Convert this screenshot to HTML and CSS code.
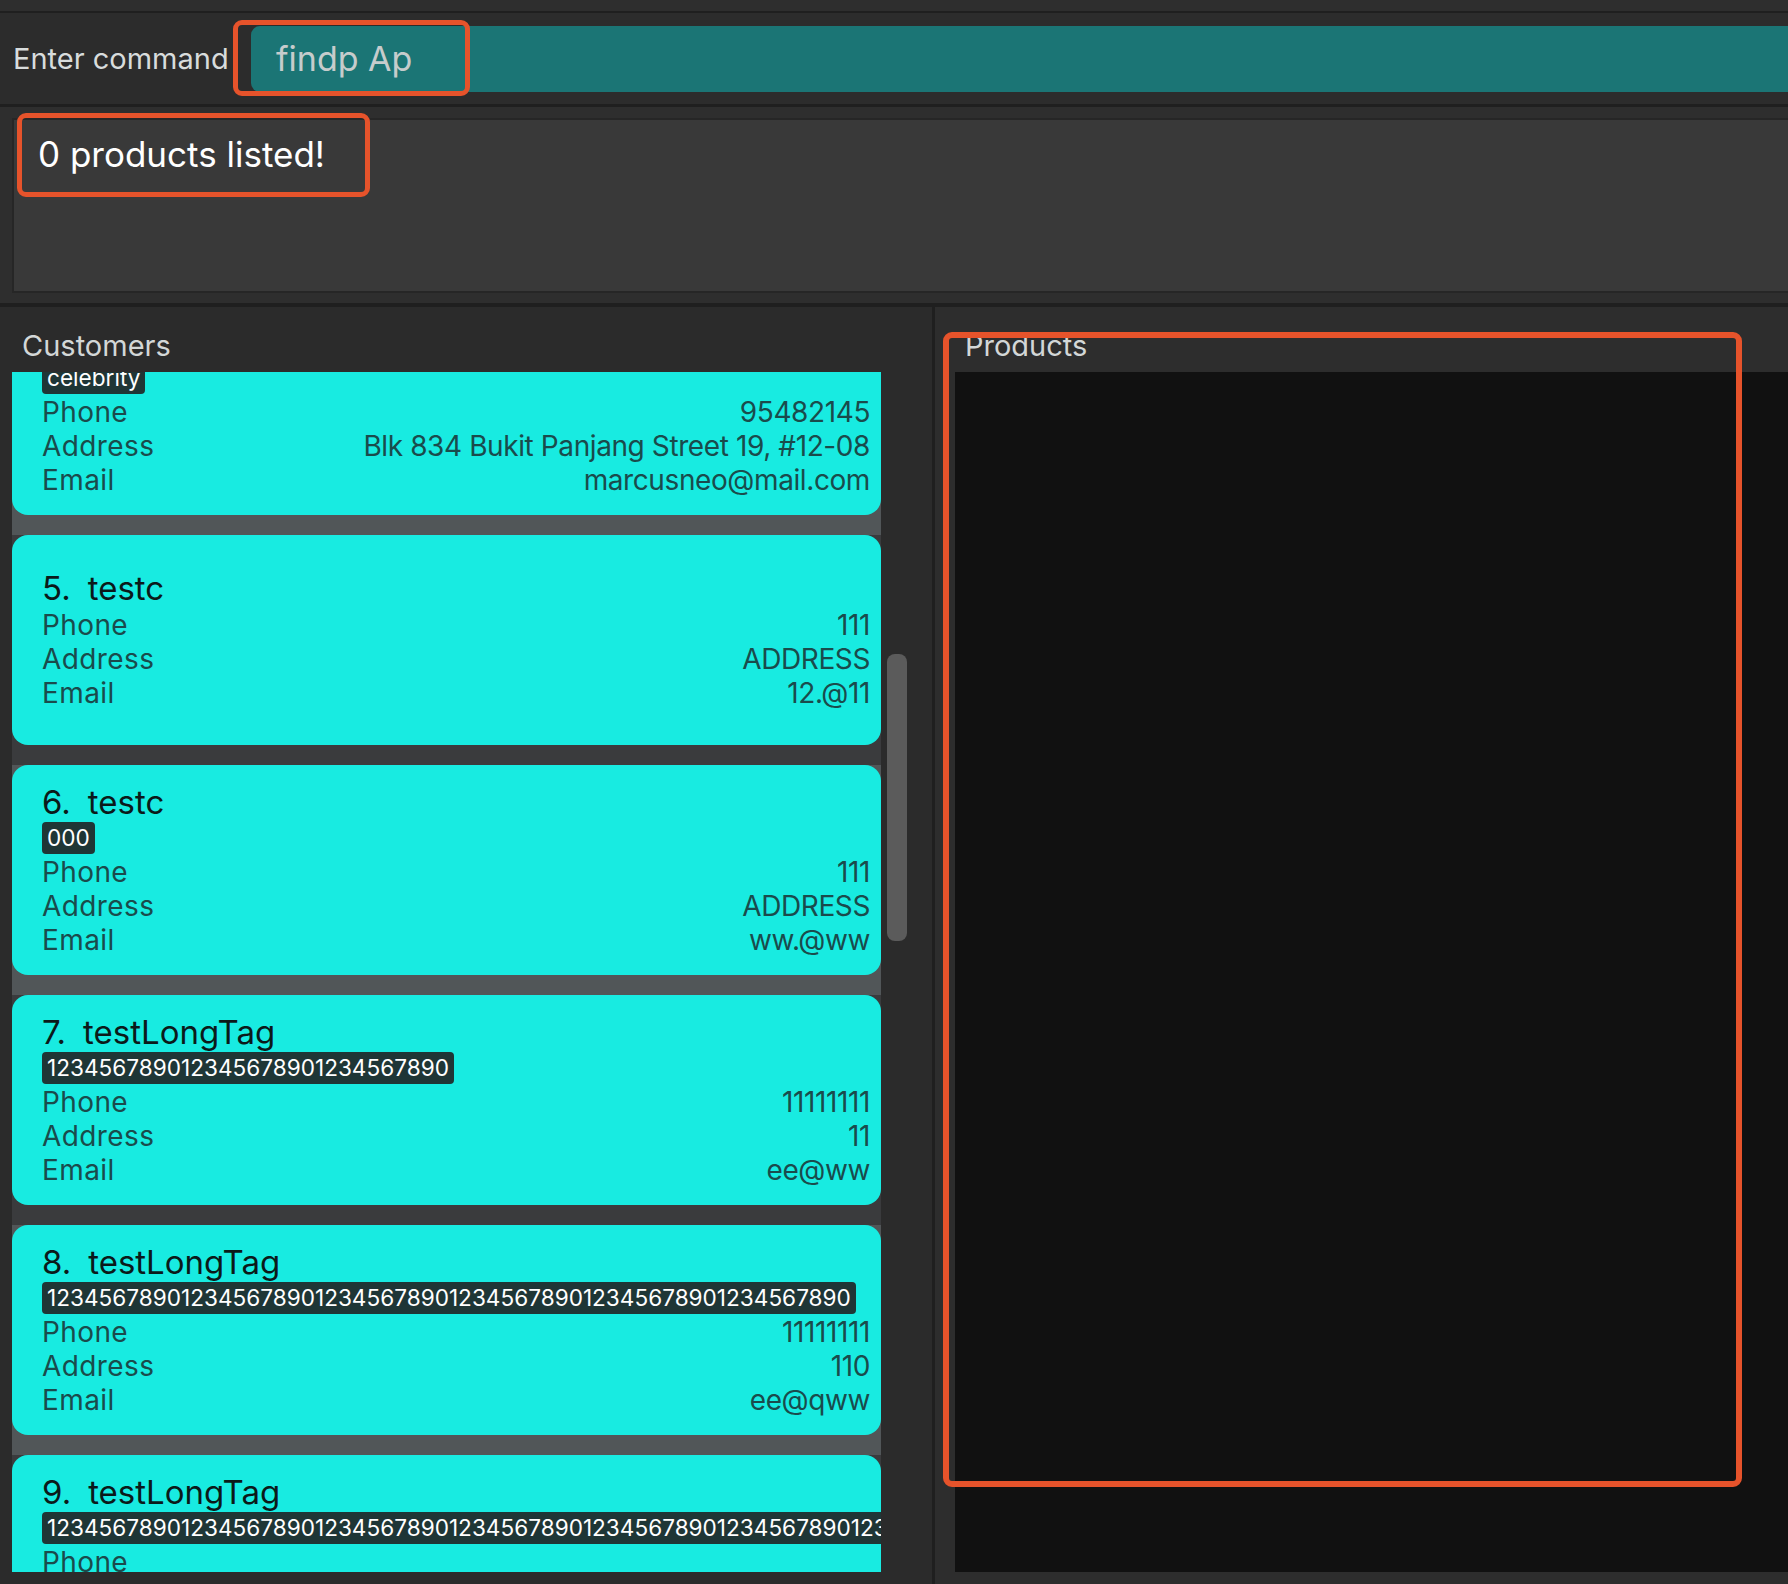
FILE: index.html
```html
<!DOCTYPE html>
<html lang="en">
<head>
<meta charset="utf-8">
<title>Shop</title>
<link rel="stylesheet" href="styles.css">
</head>
<body>
<div class="app">
  <div class="topstrip"></div>
  <div class="cmdbar">
    <span class="cmd-label">Enter command</span>
    <div class="cmd-field">findp Ap</div>
  </div>
  <div class="result">
    <div class="result-box">0 products listed!</div>
  </div>
  <div class="panels">
    <section class="panel customers">
      <div class="panel-title">Customers</div>
      <div class="list-view">
        <div class="cells">
          <div class="cells-inner">
            <div class="cell">
              <div class="card"><div class="content">
                <div class="name"><span class="idx">4.</span>Marcus Neo</div>
                <div class="tags"><span class="tag">celebrity</span></div>
                <div class="row"><span>Phone</span><span>95482145</span></div>
                <div class="row"><span>Address</span><span>Blk 834 Bukit Panjang Street 19, #12-08</span></div>
                <div class="row"><span>Email</span><span>marcusneo@mail.com</span></div>
              </div></div>
            </div>
            <div class="cell alt">
              <div class="card"><div class="content">
                <div class="name"><span class="idx">5.</span>testc</div>
                <div class="row"><span>Phone</span><span>111</span></div>
                <div class="row"><span>Address</span><span>ADDRESS</span></div>
                <div class="row"><span>Email</span><span>12.@11</span></div>
              </div></div>
            </div>
            <div class="cell">
              <div class="card"><div class="content">
                <div class="name"><span class="idx">6.</span>testc</div>
                <div class="tags"><span class="tag">000</span></div>
                <div class="row"><span>Phone</span><span>111</span></div>
                <div class="row"><span>Address</span><span>ADDRESS</span></div>
                <div class="row"><span>Email</span><span>ww.@ww</span></div>
              </div></div>
            </div>
            <div class="cell alt">
              <div class="card"><div class="content">
                <div class="name"><span class="idx">7.</span>testLongTag</div>
                <div class="tags"><span class="tag">123456789012345678901234567890</span></div>
                <div class="row"><span>Phone</span><span>11111111</span></div>
                <div class="row"><span>Address</span><span>11</span></div>
                <div class="row"><span>Email</span><span>ee@ww</span></div>
              </div></div>
            </div>
            <div class="cell">
              <div class="card"><div class="content">
                <div class="name"><span class="idx">8.</span>testLongTag</div>
                <div class="tags"><span class="tag">123456789012345678901234567890123456789012345678901234567890</span></div>
                <div class="row"><span>Phone</span><span>11111111</span></div>
                <div class="row"><span>Address</span><span>110</span></div>
                <div class="row"><span>Email</span><span>ee@qww</span></div>
              </div></div>
            </div>
            <div class="cell alt">
              <div class="card"><div class="content">
                <div class="name"><span class="idx">9.</span>testLongTag</div>
                <div class="tags"><span class="tag">12345678901234567890123456789012345678901234567890123456789012345678901234567890</span></div>
                <div class="row"><span>Phone</span><span>11111111</span></div>
                <div class="row"><span>Address</span><span>11</span></div>
                <div class="row"><span>Email</span><span>ee@ww</span></div>
              </div></div>
            </div>
          </div>
        </div>
        <div class="scroll-track">
          <div class="thumb" style="margin-top:282px;height:287px"></div>
        </div>
      </div>
    </section>
    <div class="split"></div>
    <section class="panel products">
      <div class="panel-title">Products</div>
      <div class="product-list"></div>
    </section>
  </div>
  <div class="annot annot-cmd"></div>
  <div class="annot annot-result"></div>
  <div class="annot annot-products"></div>
</div>
</body>
</html>
```
FILE: styles.css
```css
html, body {
  margin: 0;
  padding: 0;
}

body {
  background: #2b2b2b;
  font-family: Inter, "Noto Sans", "Liberation Sans", sans-serif;
  width: 1788px;
  height: 1584px;
  overflow: hidden;
}

.app {
  position: relative;
  width: 1788px;
  height: 1584px;
  display: flex;
  flex-direction: column;
}

.topstrip {
  height: 11px;
  background: #2e2e2e;
  border-bottom: 2px solid #1f1f1f;
}

.cmdbar {
  height: 94px;
  box-sizing: border-box;
  display: flex;
  align-items: center;
  background: #2c2c2c;
  border-bottom: 3px solid #1f1f1f;
  padding-left: 13px;
}

.cmd-label {
  width: 238px;
  flex-shrink: 0;
  font-size: 29px;
  color: #d8dcdc;
  white-space: nowrap;
}

.cmd-field {
  flex: 1;
  height: 66px;
  box-sizing: border-box;
  background: #1b7575;
  border-radius: 9px 0 0 9px;
  color: #c6cccc;
  font-size: 34px;
  display: flex;
  align-items: center;
  padding-left: 25px;
}

.result {
  height: 200px;
  box-sizing: border-box;
  background: #2e2e2e;
  padding: 11px 0 10px 12px;
  border-bottom: 4px solid #1f1f1f;
}

.result-box {
  height: 100%;
  box-sizing: border-box;
  background: #393939;
  border: 2px solid #262626;
  border-right: none;
  padding: 13px 24px;
  font-size: 35px;
  line-height: 42px;
  color: #ffffff;
}

.panels {
  flex: 1;
  display: flex;
  min-height: 0;
}

.customers {
  width: 932px;
  background: #2b2b2b;
  display: flex;
  flex-direction: column;
}

.split {
  width: 3px;
  background: #1f1f1f;
}

.products {
  flex: 1;
  background: #2d2d2d;
  display: flex;
  flex-direction: column;
  min-width: 0;
}

.panel-title {
  height: 65px;
  box-sizing: border-box;
  padding: 21px 0 0 22px;
  font-size: 29px;
  line-height: 36px;
  color: #d3d7d7;
}

.products .panel-title {
  padding-left: 30px;
}

.list-view {
  height: 1200px;
  display: flex;
  padding-left: 12px;
}

.cells {
  width: 869px;
  height: 1200px;
  overflow: hidden;
  flex-shrink: 0;
}

.cells-inner {
  margin-top: -67px;
}

.cell {
  padding-bottom: 20px;
  background: #515658;
}

.cell.alt {
  background: #3a3b3d;
}

.card {
  height: 210px;
  box-sizing: border-box;
  background: #18ebe1;
  border-radius: 16px;
  padding: 0 11px 0 30px;
  display: flex;
  flex-direction: column;
  justify-content: center;
  overflow: hidden;
}

.content {
  min-width: 100%;
  width: max-content;
}

.name {
  font-size: 33px;
  line-height: 36px;
  color: #0b1a1a;
  margin-bottom: 2px;
  white-space: nowrap;
}

.name .idx {
  margin-right: 17px;
}

.tags {
  height: 32px;
  margin-bottom: 1px;
  display: flex;
  white-space: nowrap;
}

.tag {
  flex-shrink: 0;
  background: #1f3636;
  color: #ffffff;
  font-size: 22.6px;
  line-height: 32px;
  padding: 0 5px;
  border-radius: 4px;
}

.row {
  display: flex;
  justify-content: space-between;
  font-size: 28px;
  line-height: 34px;
  color: #1a4b4c;
  white-space: nowrap;
}

.row span:first-child {
  letter-spacing: 0.4px;
}

.row span:last-child {
  letter-spacing: -0.4px;
}

.scroll-track {
  width: 51px;
  padding-left: 6px;
  box-sizing: border-box;
}

.thumb {
  width: 20px;
  background: #5b5b5b;
  border-radius: 8px;
}

.product-list {
  height: 1200px;
  margin-left: 20px;
  background: #111111;
}

.annot {
  position: absolute;
  box-sizing: border-box;
  border: 5px solid #e6532b;
  border-radius: 9px;
}

.annot-cmd {
  left: 233px;
  top: 20px;
  width: 237px;
  height: 76px;
}

.annot-result {
  left: 17px;
  top: 113px;
  width: 353px;
  height: 84px;
}

.annot-products {
  left: 943px;
  top: 332px;
  width: 799px;
  height: 1155px;
  border-width: 6px;
}
```
